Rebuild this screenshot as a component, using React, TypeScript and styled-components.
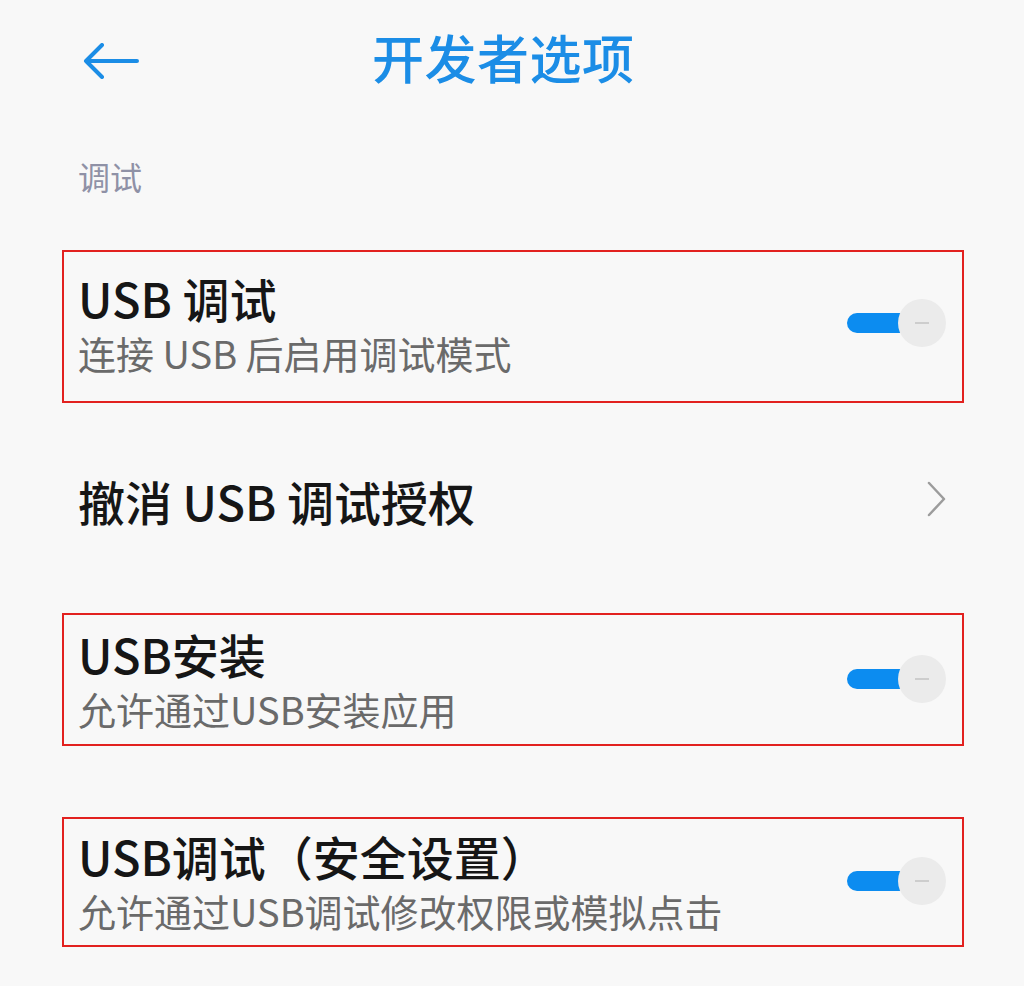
import styled, { createGlobalStyle } from "styled-components";

interface ISetting {
  id: string;
  title: string;
  sub?: string;
  kind: "toggle" | "link";
  marked: boolean;
  gap: number;
  pt: number;
  pb: number;
}

const settings: ISetting[] = [
  {
    id: "usb-debug",
    title: "USB 调试",
    sub: "连接 USB 后启用调试模式",
    kind: "toggle",
    marked: true,
    gap: 54,
    pt: 18,
    pb: 25,
  },
  {
    id: "revoke",
    title: "撤消 USB 调试授权",
    kind: "link",
    marked: false,
    gap: 68,
    pt: 0,
    pb: 0,
  },
  {
    id: "usb-install",
    title: "USB安装",
    sub: "允许通过USB安装应用",
    kind: "toggle",
    marked: true,
    gap: 82,
    pt: 11,
    pb: 12,
  },
  {
    id: "usb-secure",
    title: "USB调试（安全设置）",
    sub: "允许通过USB调试修改权限或模拟点击",
    kind: "toggle",
    marked: true,
    gap: 71,
    pt: 9,
    pb: 11,
  },
];

const GlobalStyle = createGlobalStyle`
  html, body {
    margin: 0;
    padding: 0;
    background: #f8f8f8;
  }
  body {
    font-family: "Noto Sans CJK SC", "Noto Sans", sans-serif;
  }
`;

const Screen = styled.div`
  width: 1024px;
  height: 986px;
  overflow: hidden;
  background: #f8f8f8;
`;

const Header = styled.header`
  height: 120px;
  display: flex;
  align-items: center;
  padding-left: 83px;
`;

const BackButton = styled.button`
  width: 56px;
  height: 36px;
  padding: 0;
  margin-top: 2px;
  border: none;
  background: none;
  display: flex;
  align-items: center;
  svg {
    display: block;
  }
`;

const Title = styled.h1`
  margin: -6px 0 0 233px;
  font-size: 52px;
  line-height: 60px;
  font-weight: 500;
  color: #1b8de6;
  letter-spacing: 0.5px;
`;

const SectionLabel = styled.div`
  margin: 36px 0 0 78px;
  font-size: 32px;
  line-height: 40px;
  color: #8f91a6;
`;

const List = styled.div`
  display: flex;
  flex-direction: column;
`;

const Row = styled.div<{ $marked: boolean; $gap: number; $pt: number; $pb: number }>`
  margin: ${(p) => p.$gap}px 60px 0 62px;
  padding: ${(p) => p.$pt}px 16px ${(p) => p.$pb}px 14px;
  border: 2px solid ${(p) => (p.$marked ? "#e2211f" : "transparent")};
  display: flex;
  align-items: center;
  justify-content: space-between;
`;

const Texts = styled.div`
  display: flex;
  flex-direction: column;
  gap: 4px;
`;

const RowTitle = styled.div`
  font-size: 47px;
  line-height: 56px;
  font-weight: 500;
  color: #161616;
`;

const RowSub = styled.div`
  font-size: 38px;
  line-height: 46px;
  color: #6a6a6a;
`;

const Switch = styled.div`
  display: flex;
  align-items: center;
`;

const Track = styled.div`
  width: 58px;
  height: 20px;
  border-radius: 10px 0 0 10px;
  background: #0c8cf0;
`;

const Knob = styled.div`
  width: 48px;
  height: 48px;
  margin-left: -7px;
  border-radius: 50%;
  background: #ebebeb;
  display: flex;
  align-items: center;
  justify-content: center;
  &::after {
    content: "";
    width: 14px;
    height: 2px;
    background: #cdcdcd;
  }
`;

const Chevron = styled.svg`
  display: block;
  margin-top: -4px;
`;

function App() {
  return (
    <Screen>
      <GlobalStyle />
      <Header>
        <BackButton>
          <svg width="56" height="36" viewBox="0 0 56 36" fill="none">
            <path
              d="M54 18H3M19 2L3 18l16 16"
              stroke="#1b8de6"
              strokeWidth="4"
              strokeLinecap="round"
              strokeLinejoin="round"
            />
          </svg>
        </BackButton>
        <Title>开发者选项</Title>
      </Header>
      <SectionLabel>调试</SectionLabel>
      <List>
        {settings.map((s) => (
          <Row key={s.id} $marked={s.marked} $gap={s.gap} $pt={s.pt} $pb={s.pb}>
            <Texts>
              <RowTitle>{s.title}</RowTitle>
              {s.sub && <RowSub>{s.sub}</RowSub>}
            </Texts>
            {s.kind === "toggle" ? (
              <Switch>
                <Track />
                <Knob />
              </Switch>
            ) : (
              <Chevron width="20" height="36" viewBox="0 0 20 36" fill="none">
                <path
                  d="M3 2l15 16L3 34"
                  stroke="#9c9c9c"
                  strokeWidth="2.5"
                  strokeLinecap="round"
                  strokeLinejoin="round"
                />
              </Chevron>
            )}
          </Row>
        ))}
      </List>
    </Screen>
  );
}

export default App;
